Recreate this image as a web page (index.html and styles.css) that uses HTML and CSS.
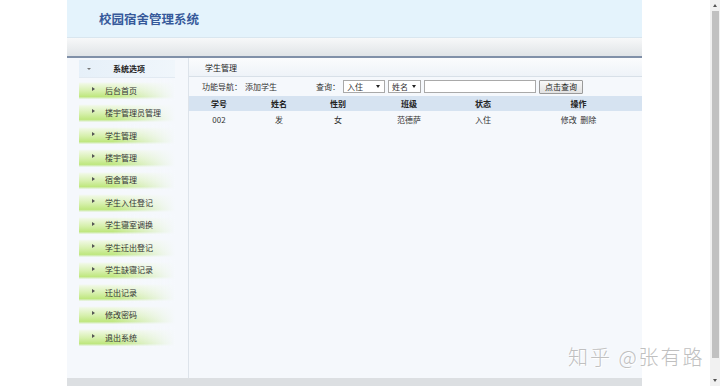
FILE: index.html
```html
<!DOCTYPE html>
<html lang="zh-CN">
<head>
<meta charset="utf-8">
<title>校园宿舍管理系统</title>
<link rel="stylesheet" href="styles.css">
</head>
<body>
<div class="window">
  <div class="viewport">
    <div class="page">
      <header class="top"><h1 class="title">校园宿舍管理系统</h1></header>
      <div class="toolbar"></div>
      <div class="main">
        <aside class="side">
          <div class="side-head"><span class="caret"></span><span class="side-title">系统选项</span></div>
          <ul class="menu">
            <li class="item">后台首页</li>
            <li class="item">楼宇管理员管理</li>
            <li class="item">学生管理</li>
            <li class="item">楼宇管理</li>
            <li class="item">宿舍管理</li>
            <li class="item">学生入住登记</li>
            <li class="item">学生寝室调换</li>
            <li class="item">学生迁出登记</li>
            <li class="item">学生缺寝记录</li>
            <li class="item">迁出记录</li>
            <li class="item">修改密码</li>
            <li class="item">退出系统</li>
          </ul>
        </aside>
        <section class="content">
          <div class="crumb">学生管理</div>
          <div class="nav">
            <span class="nav-label">功能导航：</span>
            <span class="nav-link">添加学生</span>
            <span class="query-label">查询：</span>
            <span class="select sel-status">入住</span>
            <span class="select sel-field">姓名</span>
            <span class="input"></span>
            <span class="btn">点击查询</span>
          </div>
          <table class="grid">
            <colgroup>
              <col class="c1"><col class="c2"><col class="c3"><col class="c4"><col class="c5"><col class="c6">
            </colgroup>
            <thead>
              <tr><th>学号</th><th>姓名</th><th>性别</th><th>班级</th><th>状态</th><th>操作</th></tr>
            </thead>
            <tbody>
              <tr><td>002</td><td>发</td><td>女</td><td>范德萨</td><td>入住</td><td>修改&nbsp;&nbsp;删除</td></tr>
            </tbody>
          </table>
        </section>
      </div>
      <div class="foot"></div>
    </div>
    <div class="watermark">知乎 @张有路</div>
  </div>
  <div class="scrollbar">
    <span class="arrow up"></span>
    <span class="thumb"></span>
    <span class="arrow down"></span>
  </div>
</div>
</body>
</html>
```
FILE: styles.css
```css
* { box-sizing: border-box; }
html, body { margin: 0; padding: 0; background: #ffffff; }
body {
  font-family: "Noto Sans CJK SC", "Liberation Sans", sans-serif;
  font-size: 8px;
  color: #333;
  height: 386px;
  overflow: hidden;
}
.window { display: flex; height: 386px; }
.viewport { flex: 1; position: relative; overflow: hidden; }
.page { width: 575px; margin-left: 67px; }

.top {
  height: 38px;
  background: #e4f3fc;
  border-bottom: 1px solid #d9e6ef;
  display: flex;
  align-items: center;
  padding-left: 32px;
}
.title {
  margin: 0;
  font-size: 12.5px;
  font-weight: 700;
  color: #36599a;
  letter-spacing: 0;
}
.toolbar {
  height: 20px;
  background: linear-gradient(#f7f8f9, #e0e4e7);
  border-bottom: 2px solid #8090a8;
}
.main { display: flex; height: 320px; background: #f5f8fc; }

.side {
  width: 122px;
  border-right: 1px solid #dde3ea;
  padding: 2px 13px 0 12px;
}
.side-head {
  height: 18px;
  display: flex;
  align-items: center;
  background: linear-gradient(to right, #e6f0f9, #f0f6fb);
  border-bottom: 1px solid #e2eaf2;
}
.caret {
  width: 0; height: 0;
  margin-left: 8px;
  border-left: 2px solid transparent;
  border-right: 2px solid transparent;
  border-top: 2px solid #777;
}
.side-title { margin-left: 22px; font-weight: 700; color: #222; }

.menu { list-style: none; margin: 1px 0 0; padding: 0; }
.item {
  height: 22.45px;
  display: flex;
  align-items: center;
  position: relative;
  padding-left: 26px;
  color: #333;
  background:
    linear-gradient(to right, rgba(245,248,252,0) 0%, rgba(245,248,252,0) 35%, rgba(245,248,252,0.85) 88%, #f5f8fc 100%),
    linear-gradient(to bottom, #f5f8fc 0%, #f5f8fc 14%, #eff8e2 22%, #d6f0ac 55%, #bfe77f 80%, #d6eebb 86%, #f5f8fc 92%, #f5f8fc 100%);
}
.item::before {
  content: "";
  position: absolute;
  left: 13px; top: 8px;
  width: 0; height: 0;
  border-top: 2.5px solid transparent;
  border-bottom: 2.5px solid transparent;
  border-left: 3px solid #555;
}

.content { flex: 1; }
.crumb {
  height: 19px;
  display: flex;
  align-items: center;
  padding-left: 16px;
  color: #222;
  background: linear-gradient(#fbfcfd, #eef3f8);
  border-bottom: 1px solid #d8e0e8;
}
.nav {
  height: 19px;
  display: flex;
  align-items: center;
  padding-left: 13px;
  color: #333;
}
.nav-link { margin-left: 3px; }
.query-label { margin-left: 39px; }
.select {
  position: relative;
  height: 13px;
  margin-left: 2px;
  background: #fff;
  border: 1px solid #a9a9a9;
  display: flex;
  align-items: center;
  padding-left: 3px;
}
.select::after {
  content: "";
  position: absolute;
  right: 4px; top: 4px;
  border-left: 2px solid transparent;
  border-right: 2px solid transparent;
  border-top: 3px solid #222;
}
.sel-status { width: 42px; margin-left: 3px; }
.sel-field { width: 33px; margin-left: 3px; }
.input {
  width: 112px;
  height: 13px;
  margin-left: 3px;
  background: #fff;
  border: 1px solid #a9a9a9;
}
.btn {
  height: 14px;
  width: 44px;
  margin-left: 3px;
  display: flex;
  align-items: center;
  justify-content: center;
  border: 1px solid #9a9a9a;
  border-radius: 1px;
  background: linear-gradient(#f8f8f8, #e2e2e2);
  color: #222;
}

.grid { width: 100%; border-collapse: collapse; table-layout: fixed; }
.c1 { width: 60px; } .c2 { width: 60px; } .c3 { width: 58px; }
.c4 { width: 84px; } .c5 { width: 64px; } .c6 { width: auto; }
.grid th {
  height: 15px;
  padding: 0;
  background: #d6e3f1;
  font-weight: 700;
  color: #222;
  text-align: center;
}
.grid td {
  height: 17px;
  padding: 0;
  text-align: center;
  color: #333;
}

.foot { height: 10px; background: #dcdfe2; }

.watermark {
  position: absolute;
  left: 568px;
  top: 342px;
  font-size: 20px;
  font-weight: 300;
  color: #c0c0c0;
  letter-spacing: 2px;
  text-shadow: 1px 1px 0 #ffffff, -1px 0 0 rgba(255,255,255,0.6);
  white-space: nowrap;
}

.scrollbar {
  width: 10px;
  background: #f1f1f1;
  display: flex;
  flex-direction: column;
  align-items: center;
}
.arrow { width: 0; height: 0; border-left: 2px solid transparent; border-right: 2px solid transparent; }
.up { margin-top: 4px; border-bottom: 3px solid #555; }
.down { margin-top: auto; margin-bottom: 4px; border-top: 3px solid #555; }
.thumb { width: 7px; height: 347px; margin-top: 4px; background: #c1c1c1; }
```
